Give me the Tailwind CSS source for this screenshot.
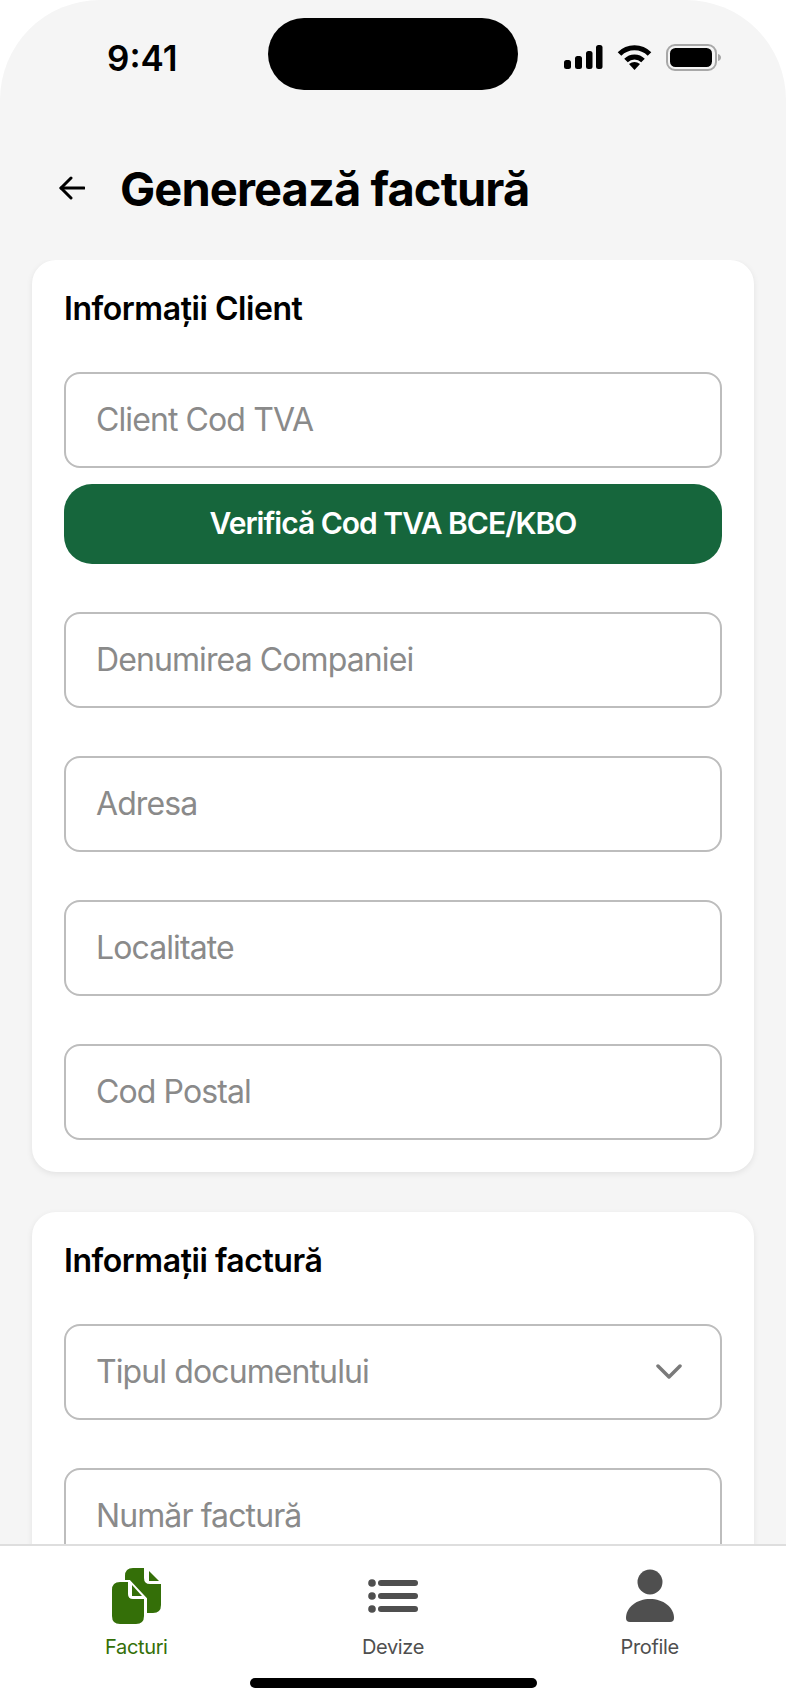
<!DOCTYPE html>
<html lang="ro">

<head>
    <meta charset="UTF-8">
    <meta name="viewport" content="width=device-width, initial-scale=1.0">
    <title>Generează factură</title>
    <script src="https://cdn.jsdelivr.net/npm/@tailwindcss/browser@4"></script>
</head>

<body class="bg-white font-['Inter',sans-serif]">

    <div class="relative w-[786px] h-[1704px] overflow-hidden bg-white flex flex-col">

        <div class="flex-1 min-h-0 flex flex-col overflow-hidden bg-[#f5f5f5] rounded-t-[100px]">

            <!-- status bar -->
            <div class="shrink-0 h-[116px] flex items-center justify-between pl-[107px] pr-[64px]">
                <span class="text-[35px] font-semibold text-black leading-none">9:41</span>
                <svg width="158" height="28" viewBox="0 0 158 28">
                    <rect x="0" y="16" width="7" height="9" rx="2.5" fill="#000" />
                    <rect x="11" y="12" width="7" height="13" rx="2.5" fill="#000" />
                    <rect x="22" y="7" width="6.5" height="18" rx="2.5" fill="#000" />
                    <rect x="32" y="1" width="6.5" height="24" rx="2.5" fill="#000" />
                    <path d="M55.5 10 A21 21 0 0 1 85.5 10" fill="none" stroke="#000" stroke-width="5" />
                    <path d="M62 16.5 A12 12 0 0 1 79 16.5" fill="none" stroke="#000" stroke-width="5" />
                    <path d="M70.5 26 L65 20 Q70.5 16 76 20 Z" fill="#000" />
                    <rect x="103" y="1" width="49" height="25" rx="8" fill="none" stroke="#a8a8a8" stroke-width="2" />
                    <rect x="106" y="4" width="42" height="19" rx="5.5" fill="#000" />
                    <path d="M154 10 Q157 11 157 13.5 Q157 16 154 17 Z" fill="#a8a8a8" />
                </svg>
            </div>

            <!-- header -->
            <div class="shrink-0 h-[144px] flex items-center pl-[59px] gap-[35px]">
                <svg width="26" height="24" viewBox="0 0 26 24" fill="none" stroke="#000" stroke-width="3"
                    stroke-linecap="round" stroke-linejoin="round">
                    <path d="M25 12H2" />
                    <path d="M12 2L2 12L12 22" />
                </svg>
                <h1 class="text-[47px] font-bold text-black leading-none tracking-[-0.9px]">Generează factură</h1>
            </div>

            <div class="flex-1 min-h-0 overflow-hidden px-8">

                <!-- client -->
                <section class="bg-white rounded-[24px] shadow-[0_2px_6px_rgba(0,0,0,0.08)] px-8 pt-[29px] pb-8">
                    <h2 class="h-10 leading-10 text-[32px] font-semibold text-black tracking-[-0.45px]">Informații Client</h2>
                    <div class="mt-[43px] h-[96px] flex items-center px-[30px] rounded-2xl border-2 border-[#bdbdbd] text-[32px] text-[#8a8a8a] tracking-[-0.9px]">Client Cod TVA</div>
                    <button class="mt-4 w-full h-[80px] pb-[2px] rounded-[28px] bg-[#16663c] text-white text-[30px] font-semibold tracking-[-1px]">Verifică Cod TVA BCE/KBO</button>
                    <div class="mt-[48px] flex flex-col gap-[48px]">
                        <div class="h-[96px] flex items-center px-[30px] rounded-2xl border-2 border-[#bdbdbd] text-[32px] text-[#8a8a8a] tracking-[-0.9px]">Denumirea Companiei</div>
                        <div class="h-[96px] flex items-center px-[30px] rounded-2xl border-2 border-[#bdbdbd] text-[32px] text-[#8a8a8a] tracking-[-0.9px]">Adresa</div>
                        <div class="h-[96px] flex items-center px-[30px] rounded-2xl border-2 border-[#bdbdbd] text-[32px] text-[#8a8a8a] tracking-[-0.9px]">Localitate</div>
                        <div class="h-[96px] flex items-center px-[30px] rounded-2xl border-2 border-[#bdbdbd] text-[32px] text-[#8a8a8a] tracking-[-0.9px]">Cod Postal</div>
                    </div>
                </section>

                <!-- invoice -->
                <section class="mt-10 bg-white rounded-[24px] shadow-[0_2px_6px_rgba(0,0,0,0.08)] px-8 pt-[29px] pb-8">
                    <h2 class="h-10 leading-10 text-[32px] font-semibold text-black tracking-[-0.45px]">Informații factură</h2>
                    <div class="mt-[43px] h-[96px] flex items-center justify-between pl-[30px] pr-[38px] rounded-2xl border-2 border-[#bdbdbd] text-[32px] text-[#8a8a8a] tracking-[-0.9px]">
                        <span>Tipul documentului</span>
                        <svg width="26" height="16" viewBox="0 0 26 16" fill="none" stroke="#7a7a7a" stroke-width="3.5"
                            stroke-linecap="round" stroke-linejoin="round">
                            <path d="M2 2L13 13L24 2" />
                        </svg>
                    </div>
                    <div class="mt-[48px] h-[96px] flex items-center px-[30px] rounded-2xl border-2 border-[#bdbdbd] text-[32px] text-[#8a8a8a] tracking-[-0.9px]">Număr factură</div>
                </section>
            </div>
        </div>

        <!-- tab bar -->
        <footer class="shrink-0 h-[160px] bg-white border-t-2 border-[#dedede]">
            <div class="grid grid-cols-3 px-2 pt-5">
                <div class="flex flex-col items-center">
                    <svg width="60" height="60" viewBox="0 0 60 60">
                        <path d="M27 2H38V12Q38 18 44 18H55V39Q55 47 47 47H27Q19 47 19 39V10Q19 2 27 2Z" fill="#346f08" />
                        <path d="M43 5L53 15H43Z" fill="#346f08" />
                        <path d="M14 16H23L39 33V50Q39 58 30 58H14Q6 58 6 50V24Q6 16 14 16Z" fill="#fff" stroke="#fff" stroke-width="4" />
                        <path d="M14 16H22V28Q22 33 27 33H38V50Q38 58 30 58H14Q6 58 6 50V24Q6 16 14 16Z" fill="#346f08" />
                        <path d="M26 19L36 30H26Z" fill="#346f08" />
                    </svg>
                    <span class="mt-[7px] text-[20px] leading-7 text-[#346f08] tracking-[-0.35px]">Facturi</span>
                </div>
                <div class="flex flex-col items-center">
                    <svg width="60" height="60" viewBox="0 0 60 60" fill="#4f4f4f">
                        <circle cx="9" cy="17" r="3.8" />
                        <circle cx="9" cy="30" r="3.8" />
                        <circle cx="9" cy="43" r="3.8" />
                        <rect x="15" y="14" width="40" height="6" rx="3" />
                        <rect x="15" y="27" width="40" height="6" rx="3" />
                        <rect x="15" y="40" width="40" height="6" rx="3" />
                    </svg>
                    <span class="mt-[7px] text-[20px] leading-7 text-[#4f4f4f] tracking-[-0.35px]">Devize</span>
                </div>
                <div class="flex flex-col items-center">
                    <svg width="60" height="60" viewBox="0 0 60 60" fill="#4f4f4f">
                        <circle cx="30" cy="16" r="12.5" />
                        <path d="M6 52C6 41 17 33 30 33C43 33 54 41 54 52Q54 56 50 56H10Q6 56 6 52Z" />
                    </svg>
                    <span class="mt-[7px] text-[20px] leading-7 text-[#4f4f4f] tracking-[-0.35px]">Profile</span>
                </div>
            </div>
            <div class="mt-[17px] ml-[250px] w-[287px] h-[10px] rounded-full bg-black"></div>
        </footer>

        <!-- dynamic island -->
        <div class="absolute top-[18px] left-[268px] w-[250px] h-[72px] rounded-[36px] bg-black"></div>
    </div>

</body>

</html>
